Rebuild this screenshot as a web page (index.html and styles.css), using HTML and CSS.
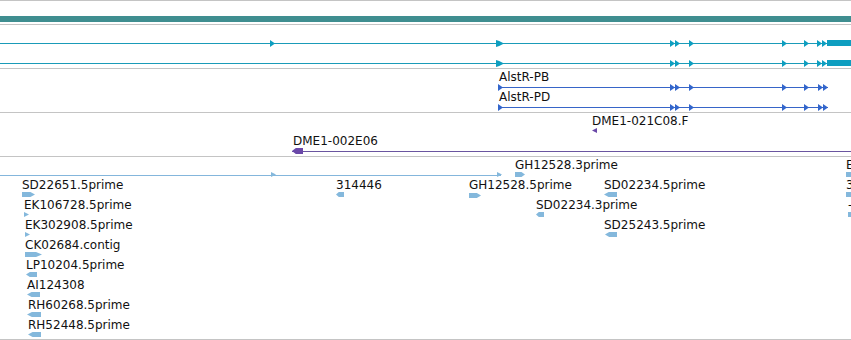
FILE: index.html
```html
<!DOCTYPE html>
<html>
<head>
<meta charset="utf-8">
<link rel="stylesheet" href="styles.css">
</head>
<body>
<div class="browser">
  <div class="track t-ruler">
    <div class="bar teal" style="left:0;top:15px;width:851px;height:6px"></div>
  </div>

  <div class="track t-mid">
    <div class="line cyan" style="left:0;top:18px;width:851px"></div>
    <div class="tri-r cyan-bg" style="left:270px;top:15px"></div>
    <div class="tri-r cyan-bg wide" style="left:496px;top:15px"></div>
    <div class="tri-r cyan-bg" style="left:670px;top:15px"></div>
    <div class="tri-r cyan-bg" style="left:675px;top:15px"></div>
    <div class="tri-r cyan-bg" style="left:689px;top:15px"></div>
    <div class="tri-r cyan-bg" style="left:782px;top:15px"></div>
    <div class="tri-r cyan-bg" style="left:804px;top:15px"></div>
    <div class="tri-r cyan-bg" style="left:817px;top:15px"></div>
    <div class="tri-r cyan-bg" style="left:822px;top:15px"></div>
    <div class="bar cyan-bg" style="left:827px;top:15px;width:24px;height:6px"></div>

    <div class="line cyan" style="left:0;top:38px;width:851px"></div>
    <div class="tri-r cyan-bg wide" style="left:496px;top:35px"></div>
    <div class="tri-r cyan-bg" style="left:670px;top:35px"></div>
    <div class="tri-r cyan-bg" style="left:675px;top:35px"></div>
    <div class="tri-r cyan-bg" style="left:689px;top:35px"></div>
    <div class="tri-r cyan-bg" style="left:782px;top:35px"></div>
    <div class="tri-r cyan-bg" style="left:804px;top:35px"></div>
    <div class="tri-r cyan-bg" style="left:817px;top:35px"></div>
    <div class="tri-r cyan-bg" style="left:822px;top:35px"></div>
    <div class="bar cyan-bg" style="left:827px;top:35px;width:24px;height:6px"></div>
  </div>

  <div class="track t-mid">
    <span class="label" style="left:499px;top:1px">AlstR-PB</span>
    <div class="line blue" style="left:498px;top:18px;width:330px"></div>
    <div class="tri-r blue-bg" style="left:498px;top:15px"></div>
    <div class="tri-r blue-bg" style="left:670px;top:15px"></div>
    <div class="tri-r blue-bg" style="left:675px;top:15px"></div>
    <div class="tri-r blue-bg" style="left:689px;top:15px"></div>
    <div class="tri-r blue-bg" style="left:782px;top:15px"></div>
    <div class="tri-r blue-bg" style="left:804px;top:15px"></div>
    <div class="tri-r blue-bg" style="left:818px;top:15px"></div>
    <div class="tri-r blue-bg" style="left:823px;top:15px"></div>

    <span class="label" style="left:499px;top:21px">AlstR-PD</span>
    <div class="line blue" style="left:498px;top:38px;width:330px"></div>
    <div class="tri-r blue-bg" style="left:498px;top:35px"></div>
    <div class="tri-r blue-bg" style="left:670px;top:35px"></div>
    <div class="tri-r blue-bg" style="left:675px;top:35px"></div>
    <div class="tri-r blue-bg" style="left:689px;top:35px"></div>
    <div class="tri-r blue-bg" style="left:782px;top:35px"></div>
    <div class="tri-r blue-bg" style="left:804px;top:35px"></div>
    <div class="tri-r blue-bg" style="left:818px;top:35px"></div>
    <div class="tri-r blue-bg" style="left:823px;top:35px"></div>
  </div>

  <div class="track t-mid">
    <span class="label" style="left:592px;top:1px">DME1-021C08.F</span>
    <div class="tri-l purple-bg small" style="left:592px;top:15px"></div>
    <span class="label" style="left:293px;top:21px">DME1-002E06</span>
    <div class="line purple" style="left:292px;top:38px;width:559px"></div>
    <div class="est-l purple-bg" style="left:292px;top:35px;width:11px;height:6px"></div>
  </div>

  <div class="track t-est">
    <div class="line lightblue" style="left:0;top:18px;width:501px"></div>
    <div class="tri-r lb-bg small" style="left:271px;top:15px"></div>
    <div class="tri-r lb-bg small" style="left:497px;top:15px"></div>

    <span class="label" style="left:515px;top:1px">GH12528.3prime</span>
    <div class="est-r lb-bg" style="left:515px;top:15px;width:10px"></div>
    <span class="label" style="left:846px;top:1px">EST</span>
    <div class="est-r lb-bg" style="left:846px;top:15px;width:10px"></div>

    <span class="label" style="left:22px;top:21px">SD22651.5prime</span>
    <div class="est-r lb-bg" style="left:22px;top:35px;width:13px"></div>
    <span class="label" style="left:336px;top:21px">314446</span>
    <div class="est-l lb-bg" style="left:336px;top:35px;width:8px"></div>
    <span class="label" style="left:469px;top:21px">GH12528.5prime</span>
    <div class="est-r lb-bg" style="left:469px;top:36px;width:12px"></div>
    <span class="label" style="left:604px;top:21px">SD02234.5prime</span>
    <div class="est-l lb-bg" style="left:604px;top:35px;width:13px"></div>
    <span class="label" style="left:846px;top:21px">3</span>
    <div class="est-r lb-bg" style="left:846px;top:35px;width:10px"></div>

    <span class="label" style="left:24px;top:41px">EK106728.5prime</span>
    <div class="tri-r lb-bg small" style="left:24px;top:55px"></div>
    <span class="label" style="left:536px;top:41px">SD02234.3prime</span>
    <div class="est-l lb-bg" style="left:536px;top:55px;width:8px"></div>
    <span class="label" style="left:848px;top:41px">-</span>
    <div class="est-r lb-bg" style="left:848px;top:55px;width:6px"></div>

    <span class="label" style="left:25px;top:61px">EK302908.5prime</span>
    <div class="tri-r lb-bg small" style="left:25px;top:75px"></div>
    <span class="label" style="left:604px;top:61px">SD25243.5prime</span>
    <div class="est-l lb-bg" style="left:605px;top:75px;width:12px"></div>

    <span class="label" style="left:25px;top:81px">CK02684.contig</span>
    <div class="est-r lb-bg" style="left:25px;top:95px;width:17px"></div>

    <span class="label" style="left:26px;top:101px">LP10204.5prime</span>
    <div class="est-l lb-bg" style="left:26px;top:115px;width:11px"></div>

    <span class="label" style="left:27px;top:121px">AI124308</span>
    <div class="est-l lb-bg" style="left:27px;top:135px;width:13px"></div>

    <span class="label" style="left:28px;top:141px">RH60268.5prime</span>
    <div class="est-l lb-bg" style="left:27px;top:155px;width:14px"></div>

    <span class="label" style="left:28px;top:161px">RH52448.5prime</span>
    <div class="est-l lb-bg" style="left:28px;top:175px;width:13px"></div>
  </div>
</div>
</body>
</html>
```

FILE: styles.css
```css
html, body {
  margin: 0;
  padding: 0;
  background: #ffffff;
}

.browser {
  width: 851px;
  display: flex;
  flex-direction: column;
  border-top: 1px solid #c4c4c4;
  overflow: hidden;
}

.track {
  position: relative;
  border-bottom: 1px solid #c4c4c4;
  overflow: hidden;
}

.t-ruler { height: 23px; }
.t-mid { height: 43px; }
.t-est { height: 182px; }

.label {
  position: absolute;
  font-family: "DejaVu Sans", sans-serif;
  font-size: 12px;
  line-height: 14px;
  letter-spacing: 0;
  color: #111;
  white-space: nowrap;
}

.bar { position: absolute; }
.line { position: absolute; height: 1px; }

.teal { background: #3f8e90; }
.cyan { background: #1a9bb8; }
.cyan-bg { background: #0e9ec0; }
.blue { background: #3765c8; }
.blue-bg { background: #3366cc; }
.purple { background: #6a55a0; }
.purple-bg { background: #6a48a8; }
.lightblue { background: #84b6dc; }
.lb-bg { background: #84b8dc; }

.tri-r {
  position: absolute;
  width: 5px;
  height: 7px;
  clip-path: polygon(0 0, 100% 50%, 0 100%);
}
.tri-r.wide { width: 8px; clip-path: polygon(0 0, 40% 15%, 100% 50%, 40% 85%, 0 100%); }
.tri-r.small { width: 5px; height: 5px; }

.tri-l {
  position: absolute;
  width: 5px;
  height: 7px;
  clip-path: polygon(100% 0, 0 50%, 100% 100%);
}
.tri-l.small { width: 5px; height: 5px; }

.est-r {
  position: absolute;
  height: 5px;
  clip-path: polygon(0 0, 65% 0, 100% 50%, 65% 100%, 0 100%);
}

.est-l {
  position: absolute;
  height: 5px;
  clip-path: polygon(0 50%, 35% 0, 100% 0, 100% 100%, 35% 100%);
}
```
